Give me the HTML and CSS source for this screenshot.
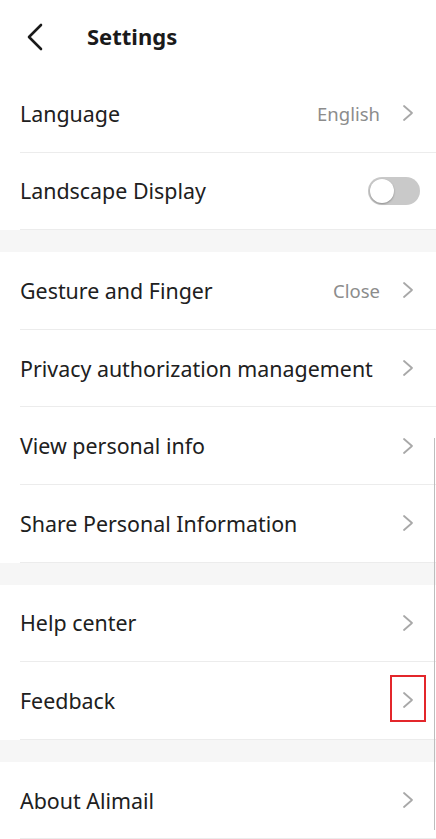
FILE: index.html
```html
<!DOCTYPE html>
<html lang="en">
    <head>
        <meta charset="utf-8">
        <meta name="viewport" content="width=device-width, initial-scale=1.0">
        <title>Settings</title>
        <link rel="stylesheet" href="styles.css">
    </head>
    <body>
        <div id="wrapper"> <!-- whole screen. -->
            <header class="top-bar">
                <svg class="back" width="20" height="28" viewBox="0 0 20 28"><path d="M16 2 L4 14 L16 26" fill="none" stroke="#1a1a1a" stroke-width="2.6" stroke-linecap="round" stroke-linejoin="round"/></svg>
                <h1 class="title">Settings</h1>
            </header>
            <main>
                <section class="group">
                    <div class="row"><span class="label">Language</span><span class="value">English</span><svg class="chev" width="12" height="18" viewBox="0 0 12 18"><path d="M2 2 L10 9 L2 16" fill="none" stroke="#a8a8a8" stroke-width="1.8" stroke-linecap="round" stroke-linejoin="round"/></svg></div>
                    <div class="row"><span class="label">Landscape Display</span><span class="switch"><span class="knob"></span></span></div>
                </section>
                <section class="group">
                    <div class="row"><span class="label">Gesture and Finger</span><span class="value">Close</span><svg class="chev" width="12" height="18" viewBox="0 0 12 18"><path d="M2 2 L10 9 L2 16" fill="none" stroke="#a8a8a8" stroke-width="1.8" stroke-linecap="round" stroke-linejoin="round"/></svg></div>
                    <div class="row"><span class="label">Privacy authorization management</span><svg class="chev" width="12" height="18" viewBox="0 0 12 18"><path d="M2 2 L10 9 L2 16" fill="none" stroke="#a8a8a8" stroke-width="1.8" stroke-linecap="round" stroke-linejoin="round"/></svg></div>
                    <div class="row"><span class="label">View personal info</span><svg class="chev" width="12" height="18" viewBox="0 0 12 18"><path d="M2 2 L10 9 L2 16" fill="none" stroke="#a8a8a8" stroke-width="1.8" stroke-linecap="round" stroke-linejoin="round"/></svg></div>
                    <div class="row"><span class="label">Share Personal Information</span><svg class="chev" width="12" height="18" viewBox="0 0 12 18"><path d="M2 2 L10 9 L2 16" fill="none" stroke="#a8a8a8" stroke-width="1.8" stroke-linecap="round" stroke-linejoin="round"/></svg></div>
                </section>
                <section class="group">
                    <div class="row"><span class="label">Help center</span><svg class="chev" width="12" height="18" viewBox="0 0 12 18"><path d="M2 2 L10 9 L2 16" fill="none" stroke="#a8a8a8" stroke-width="1.8" stroke-linecap="round" stroke-linejoin="round"/></svg></div>
                    <div class="row"><span class="label">Feedback</span><span class="marked"><svg class="chev" width="12" height="18" viewBox="0 0 12 18"><path d="M2 2 L10 9 L2 16" fill="none" stroke="#a8a8a8" stroke-width="1.8" stroke-linecap="round" stroke-linejoin="round"/></svg></span></div>
                </section>
                <section class="group">
                    <div class="row"><span class="label">About Alimail</span><svg class="chev" width="12" height="18" viewBox="0 0 12 18"><path d="M2 2 L10 9 L2 16" fill="none" stroke="#a8a8a8" stroke-width="1.8" stroke-linecap="round" stroke-linejoin="round"/></svg></div>
                </section>
            </main>
            <div class="scrollbar"></div> <!-- thin scroll indicator on the right edge. -->
        </div>
    </body>
</html>
```

FILE: styles.css
```css
*{
    margin: 0;
    padding: 0;
    box-sizing: border-box;
}
body{
    font-family: "Noto Sans", "Open Sans", sans-serif;
    background-color: #f6f6f6;
    color: #202020;
}
#wrapper{
    width: 436px;
    height: 839px;
    overflow: hidden;
    position: relative; /* for the scrollbar. */
    background-color: #f6f6f6;
}
.top-bar{
    height: 75px;
    background-color: #fff;
    display: flex;
    align-items: center;
    padding: 0 0 0 25px;
}
.back{
    display: block;
    margin-top: -1px;
}
.title{
    margin-left: 42px;
    margin-top: -4px;
    font-size: 22px;
    font-weight: 700;
    line-height: 1;
    color: #1a1a1a;
}
main{
    display: flex;
    flex-direction: column;
    gap: 22px; /* gray gaps between groups. */
}
.group{
    background-color: #fff;
    padding-left: 20px;
}
.row{
    height: 77.6px;
    display: flex;
    align-items: center;
    padding-right: 22px;
    border-bottom: 1px solid #ececec;
}
.label{
    flex: 1;
    font-size: 21.4px;
    white-space: nowrap;
}
.value{
    font-size: 18.5px;
    color: #8c8c8c;
    margin-right: 22px;
}
.chev{
    display: block;
}
.switch{
    width: 52px;
    height: 28px;
    border-radius: 14px;
    background-color: #c9c9c9;
    margin-right: -6px;
    padding: 2px;
}
.knob{
    display: block;
    width: 24px;
    height: 24px;
    border-radius: 50%;
    background-color: #fff;
    box-shadow: 0 1px 2px rgba(0,0,0,0.3);
}
.marked{
    position: relative;
}
.marked::after{ /* red highlight box over the feedback arrow. */
    content: "";
    position: absolute;
    left: -12px;
    top: -16px;
    width: 32px;
    height: 43px;
    border: 2px solid #e3262b;
}
.scrollbar{
    position: absolute;
    right: 1px;
    top: 438px;
    width: 1px;
    height: 392px;
    background-color: #bdbdbd;
}
```
